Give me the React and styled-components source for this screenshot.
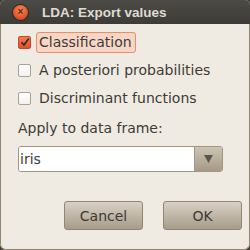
import React from 'react';
import styled, { createGlobalStyle } from 'styled-components';

const Global = createGlobalStyle`
  html, body { margin: 0; padding: 0; background: #3b3a36; }
  body { font-family: "DejaVu Sans", sans-serif; }
`;

const Window = styled.div`
  width: 250px;
  height: 250px;
  display: flex;
  flex-direction: column;
  background: #f0ebe2;
  border-radius: 5px 5px 6px 6px;
  overflow: hidden;
  box-sizing: border-box;
`;

const TitleBar = styled.div`
  height: 24px;
  flex: none;
  display: flex;
  align-items: center;
  padding-left: 13px;
  background: linear-gradient(#4c4b46, #3c3b37);
  color: #dfdbd2;
  font-family: "Liberation Sans", sans-serif;
  font-weight: bold;
  font-size: 13.5px;
`;

const CloseButton = styled.div`
  width: 15px;
  height: 15px;
  border-radius: 50%;
  background: radial-gradient(circle at 50% 35%, #f58a5a, #e0552a 60%, #b33c18);
  box-shadow: 0 0 0 1px #2a2926;
  display: flex;
  align-items: center;
  justify-content: center;
  color: #5a2a1a;
  font-size: 10px;
  line-height: 1;
  margin-right: 14px;
`;

const Body = styled.div`
  flex: 1;
  display: flex;
  flex-direction: column;
  border: 1px solid #8e846f;
  border-top: none;
  border-radius: 0 0 6px 6px;
  padding: 4px 16px 0 17px;
  color: #3c3b37;
  font-size: 14px;
`;

const CheckRow = styled.label`
  display: flex;
  align-items: center;
  height: 28px;
`;

const Box = styled.span`
  width: 11px;
  height: 11px;
  flex: none;
  border: 1px solid ${p => (p.checked ? '#c4472a' : '#a9a296')};
  border-radius: 2px;
  background: ${p => (p.checked ? 'linear-gradient(#f47b55, #df5029)' : 'linear-gradient(#ffffff, #f3f1ed)')};
  display: flex;
  align-items: center;
  justify-content: center;
  margin-right: ${p => (p.checked ? '5px' : '8px')};
`;

const Label = styled.span`
  color: #3c3b37;
  ${p => p.focused && `
    background: #f8d6c6;
    border: 1px solid #ef8b68;
    border-radius: 3px;
    padding: 1px 3px 2px 2px;
  `}
`;

const FieldLabel = styled.div`
  margin-top: 8px;
  height: 17px;
`;

const Combo = styled.div`
  display: flex;
  margin-top: 9px;
  margin-right: 10px;
  height: 26px;
  box-sizing: border-box;
  border: 1px solid #a1967f;
  border-radius: 3px;
  overflow: hidden;
`;

const Entry = styled.div`
  flex: 1;
  background: #ffffff;
  display: flex;
  align-items: center;
  padding-left: 1px;
  color: #3c3b37;
`;

const ComboButton = styled.div`
  width: 27px;
  border-left: 1px solid #a1967f;
  background: linear-gradient(#cdc4b4, #a69a85);
  display: flex;
  align-items: center;
  justify-content: center;
`;

const Buttons = styled.div`
  display: flex;
  justify-content: flex-end;
  gap: 20px;
  margin-top: 29px;
  margin-right: -9px;
`;

const Button = styled.div`
  width: 79px;
  height: 29px;
  box-sizing: border-box;
  border: 1px solid #8f8674;
  border-radius: 3px;
  background: linear-gradient(#d8d1c4, #a89c89);
  display: flex;
  align-items: center;
  justify-content: center;
  color: #3c3b37;
`;

export default function App() {
  return (
    <Window>
      <Global />
      <TitleBar>
        <CloseButton>×</CloseButton>
        LDA: Export values
      </TitleBar>
      <Body>
        <CheckRow>
          <Box checked>
            <svg width="10" height="10" viewBox="0 0 10 10">
              <path d="M1.5 5.2 L4 8 L8.8 1.5" fill="none" stroke="#2c2a26" strokeWidth="1.6" />
            </svg>
          </Box>
          <Label focused>Classification</Label>
        </CheckRow>
        <CheckRow>
          <Box />
          <Label>A posteriori probabilities</Label>
        </CheckRow>
        <CheckRow>
          <Box />
          <Label>Discriminant functions</Label>
        </CheckRow>
        <FieldLabel>Apply to data frame:</FieldLabel>
        <Combo>
          <Entry>iris</Entry>
          <ComboButton>
            <svg width="9" height="8" viewBox="0 0 9 8">
              <path d="M0 0 H9 L4.5 8 Z" fill="#5c5650" />
            </svg>
          </ComboButton>
        </Combo>
        <Buttons>
          <Button>Cancel</Button>
          <Button>OK</Button>
        </Buttons>
      </Body>
    </Window>
  );
}
